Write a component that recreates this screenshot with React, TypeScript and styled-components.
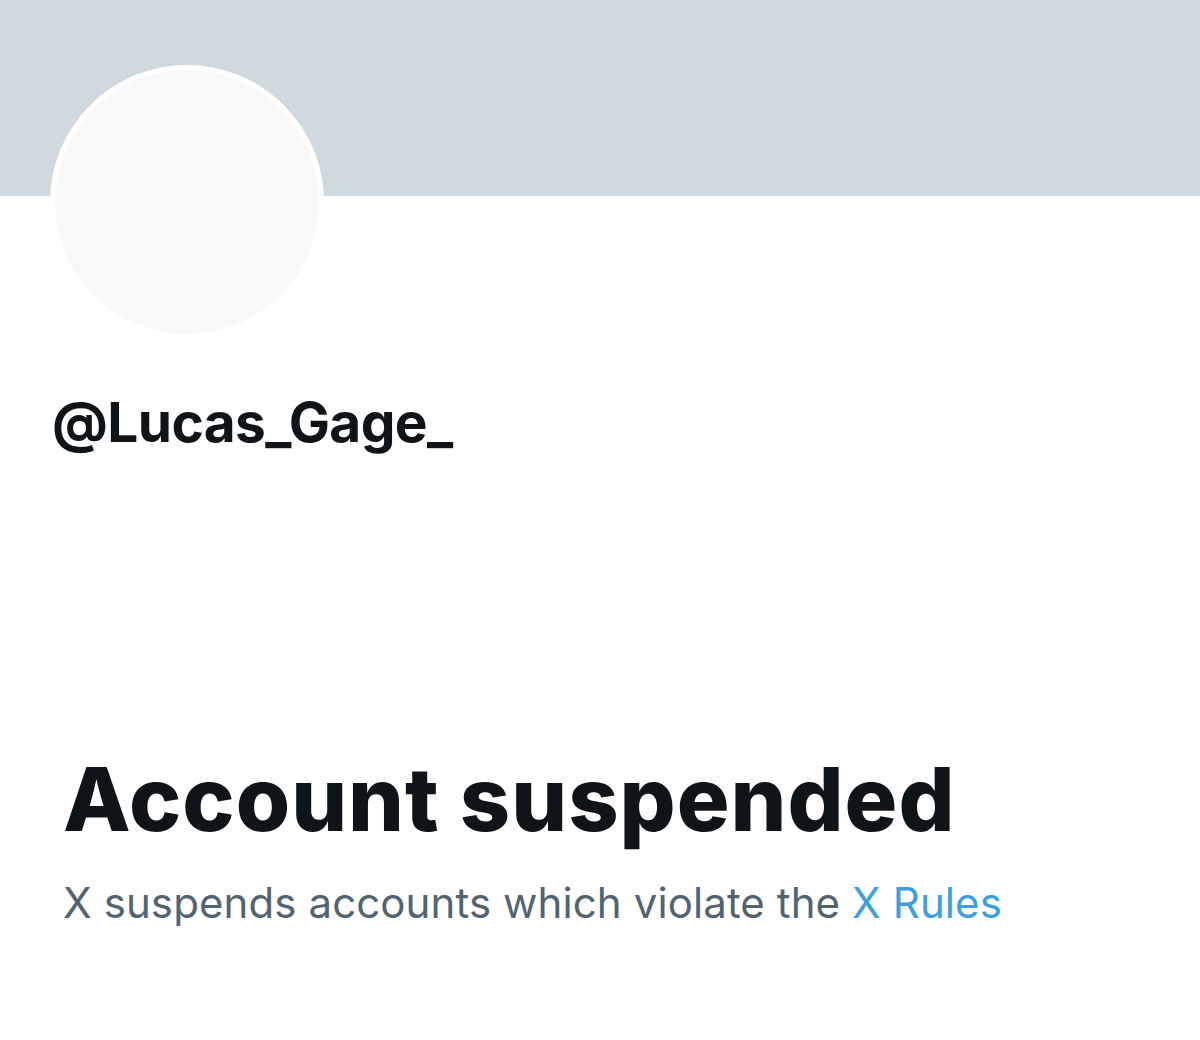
import React from "react";
import styled, { createGlobalStyle } from "styled-components";

const GlobalStyle = createGlobalStyle`
  html, body {
    margin: 0;
    padding: 0;
    background: #ffffff;
  }
  body {
    font-family: Inter, "Noto Sans", sans-serif;
    color: #0f1419;
  }
`;

export default function App() {
  return (
    <>
      <GlobalStyle />
      <Page>
        <Banner />
        <AvatarRow>
          <Avatar />
        </AvatarRow>
        <Handle>@Lucas_Gage_</Handle>
        <Notice>
          <Title>Account suspended</Title>
          <Text>
            X suspends accounts which violate the <Link href="#">X Rules</Link>
          </Text>
        </Notice>
      </Page>
    </>
  );
}

const Page = styled.div`
  width: 1200px;
  height: 1040px;
  overflow: hidden;
  background: #ffffff;
`;

const Banner = styled.div`
  height: 196px;
  background: #cfd9de;
`;

const AvatarRow = styled.div`
  padding-left: 50px;
  margin-top: -131px;
  height: 270px;
`;

const Avatar = styled.div`
  width: 264px;
  height: 264px;
  border-radius: 50%;
  border: 5px solid #ffffff;
  background: #f7f9f9;
`;

const Handle = styled.h2`
  margin: 60px 0 0 52px;
  font-size: 55px;
  font-weight: 700;
  letter-spacing: -0.6px;
  line-height: 1;
`;

const Notice = styled.div`
  margin: 305px 0 0 63px;
  display: flex;
  flex-direction: column;
  gap: 39px;
`;

const Title = styled.h1`
  margin: 0;
  font-size: 88px;
  font-weight: 800;
  letter-spacing: 1px;
  line-height: 1;
`;

const Text = styled.p`
  margin: 0;
  font-size: 42px;
  font-weight: 400;
  letter-spacing: 0.1px;
  color: #536471;
  line-height: 1;
`;

const Link = styled.a`
  color: #3f9fdc;
  text-decoration: none;
`;
